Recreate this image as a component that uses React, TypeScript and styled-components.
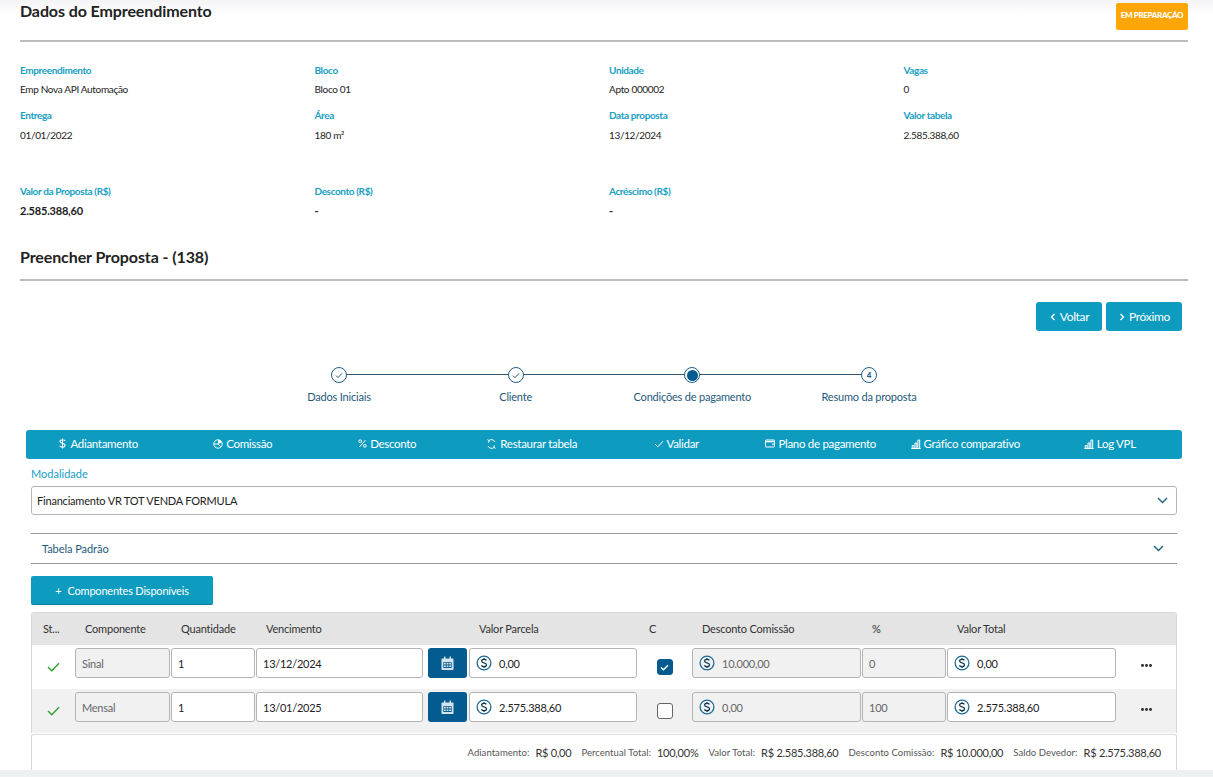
import React from "react";
import styled, { createGlobalStyle } from "styled-components";

const Global = createGlobalStyle`
  html, body { margin: 0; padding: 0; background: #fff; }
  body { font-family: Lato, "Liberation Sans", sans-serif; overflow: hidden; }
  * { box-sizing: border-box; }
`;

const Page = styled.div`
  width: 1213px; height: 777px; position: relative; overflow: hidden;
  background: linear-gradient(#f4f4f6 0, #fff 16px);
  padding: 0 25px 0 20px;
  display: flex; flex-direction: column;
`;
const TitleRow = styled.div`
  height: 42px; display: flex; justify-content: space-between; align-items: flex-start;
  border-bottom: 2px solid #bcbcbc;
`;
const Title = styled.h2`
  margin: 0; font-size: 16px; font-weight: 700; color: #222; line-height: 22px; letter-spacing: -0.1px;
`;
const Badge = styled.div`
  margin-top: 3px; width: 72px; height: 27px; background: #ffa607; border-radius: 2px;
  color: #fff; font-size: 8px; font-weight: 900; display: flex; align-items: center; justify-content: center;
  letter-spacing: -0.35px; padding-bottom: 3px;
`;
const InfoGrid = styled.div<{ $top: number }>`
  display: grid; grid-template-columns: repeat(4, 294.5px); width: 1178px; margin-top: ${p => p.$top}px;
`;
const Field = styled.div`
  height: 45px; display: flex; flex-direction: column;
`;
const FieldLabel = styled.div`
  font-size: 10px; line-height: 12px; font-weight: 700; color: #17a0c2; letter-spacing: -0.38px;
`;
const FieldValue = styled.div<{ $strong?: boolean; $gap: number }>`
  margin-top: ${p => p.$gap}px; line-height: 12px; color: #222;
  font-size: ${p => (p.$strong ? 11 : 10)}px; font-weight: ${p => (p.$strong ? 700 : 400)};
  letter-spacing: ${p => (p.$strong ? -0.2 : -0.33)}px;
`;
const SecondTitleRow = styled.div`
  margin-top: 16px; height: 35px; border-bottom: 2px solid #bcbcbc;
`;
const ActionBar = styled.div`
  margin-top: 21px; display: flex; justify-content: flex-end; gap: 4px; padding-right: 6px;
`;
const ActionButton = styled.button<{ $w: number }>`
  width: ${p => p.$w}px; height: 29px; border: none; border-radius: 3px; background: #0d9bbf; color: #fff;
  font: 400 12px Lato, sans-serif; letter-spacing: -0.35px;
  display: flex; align-items: center; justify-content: center; gap: 3px; padding: 0;
`;
const Stepper = styled.div`
  margin-top: 36px; display: flex; margin-left: 267px; width: 634px; position: relative; justify-content: space-between;
`;
const Step = styled.div`
  width: 104px; display: flex; flex-direction: column; align-items: center; position: relative;
`;
const StepLine = styled.div`
  position: absolute; left: 52px; width: 177px; top: 7px; height: 1px; background: #35566b;
`;
const Circle = styled.div`
  width: 16px; height: 16px; border-radius: 50%; background: #fff; z-index: 1; position: relative;
  border: 1px solid #1f5f87; display: flex; align-items: center; justify-content: center;
  color: #1f5f87; font-size: 8px; font-weight: 900;
`;
const ActiveDot = styled.div`
  width: 11px; height: 11px; border-radius: 50%; background: #045b8f;
`;
const StepLabel = styled.div`
  margin-top: 7px; font-size: 11px; line-height: 14px; color: #1e5a7c; white-space: nowrap; letter-spacing: -0.2px;
`;
const TabBar = styled.div`
  margin: 26px 6px 0 6px; height: 29px; background: #0d9bbf; border-radius: 3px;
  display: grid; grid-template-columns: repeat(8, 144.5px);
`;
const TabItem = styled.div`
  display: flex; align-items: center; justify-content: center; gap: 3px; color: #fff;
  font-size: 11.5px; letter-spacing: -0.3px; padding-bottom: 2px;
`;
const Section = styled.div`
  margin: 0 11px; display: flex; flex-direction: column; align-items: stretch;
`;
const ModalLabel = styled.div`
  margin-top: 8px; font-size: 11px; line-height: 14px; color: #17a0c2;
`;
const Select = styled.div`
  margin-top: 5px; height: 29px; border: 1px solid #b4b4b4; border-radius: 3px; padding: 0 8px 0 5px;
  display: flex; align-items: center; justify-content: space-between; font-size: 11px; letter-spacing: -0.2px; color: #222;
`;
const Accordion = styled.div`
  margin-top: 18px; height: 31px; border-top: 1px solid #999; border-bottom: 1px solid #999;
  display: flex; align-items: center; justify-content: space-between; padding: 0 13px 0 11px;
  font-size: 11px; letter-spacing: -0.05px; color: #1e5a7c;
`;
const AddButton = styled.button`
  margin-top: 12px; align-self: flex-start; width: 182px; height: 29px; background: #0d9bbf; color: #fff;
  border: none; border-bottom: 1px solid #0a7f9d; border-radius: 2px; font: 400 11px Lato, sans-serif; letter-spacing: -0.2px;
  display: flex; align-items: center; justify-content: center; gap: 6px; padding: 1px 0 0;
`;
const Table = styled.div`
  margin-top: 7px; border: 1px solid #d8d8d8; border-bottom: none; border-radius: 3px 3px 0 0;
`;
const cols = "42px 95px 84px 167px 44px 168px 53px 169px 84px 169px 59px";
const HeaderRow = styled.div`
  display: grid; grid-template-columns: ${cols}; column-gap: 1px; height: 32px; background: #e4e4e4; align-items: center;
  padding-bottom: 2px;
`;
const HeaderCell = styled.div<{ $pad?: number }>`
  padding-left: ${p => p.$pad ?? 10}px; font-size: 11px; letter-spacing: -0.2px; color: #333; white-space: nowrap;
`;
const Row = styled.div<{ $alt?: boolean }>`
  display: grid; grid-template-columns: ${cols}; column-gap: 1px; height: 44px; align-items: start;
  padding-top: 3px; background: ${p => (p.$alt ? "#f1f1f1" : "#fff")};
`;
const StatusCell = styled.div`
  display: flex; justify-content: center; padding-top: 14px;
`;
const Input = styled.div<{ $disabled?: boolean }>`
  height: 30px; border: 1px solid #b4b4b4; border-radius: 3px; display: flex; align-items: center; gap: 7px;
  padding-left: 6px; font-size: 11px; letter-spacing: -0.25px; background: ${p => (p.$disabled ? "#f1f1f1" : "#fff")};
  color: ${p => (p.$disabled ? "#666" : "#222")}; white-space: nowrap;
`;
const CalendarButton = styled.div`
  margin-left: 4px; width: 39px; height: 30px; border-radius: 3px; background: #045b8f;
  display: flex; align-items: center; justify-content: center;
`;
const CheckCell = styled.div`
  display: flex; justify-content: center; padding: 11px 0 0 0;
`;
const CheckBox = styled.div<{ $on?: boolean }>`
  width: 16px; height: 16px; border-radius: 3px; border: 1px solid ${p => (p.$on ? "#045b8f" : "#666")};
  background: ${p => (p.$on ? "#045b8f" : "#fff")}; display: flex; align-items: center; justify-content: center;
`;
const Dots = styled.div`
  display: flex; justify-content: center; gap: 1.2px; padding: 16px 0 0 0;
`;
const Dot = styled.span`
  width: 2.8px; height: 2.8px; border-radius: 50%; background: #333;
`;
const Footer = styled.div`
  margin-top: 1px; height: 40px; border: 1px solid #d8d8d8; border-top: 1px solid #ddd; border-radius: 3px 3px 0 0; background: #fff;
  display: flex; justify-content: flex-end; align-items: flex-start; padding: 9px 15px 0 0; gap: 10px;
`;
const Stat = styled.div`
  display: flex; align-items: center; gap: 6px; height: 16px; white-space: nowrap;
`;
const StatLabel = styled.span`
  font-size: 9.5px; color: #555; letter-spacing: 0.05px;
`;
const StatValue = styled.span`
  font-size: 11px; letter-spacing: -0.25px; color: #333;
`;
const BottomStrip = styled.div`
  position: absolute; left: 0; right: 0; bottom: 0; height: 7px; background: #edf1f1;
`;
const CoinSvg = styled.svg`
  flex-shrink: 0;
`;

const ChevronLeft = () => (
  <svg width="8" height="10" viewBox="0 0 8 10"><path d="M5.5 2 2.5 5l3 3" fill="none" stroke="#fff" strokeWidth="1.3" /></svg>
);
const ChevronRight = () => (
  <svg width="8" height="10" viewBox="0 0 8 10"><path d="M2.5 2l3 3-3 3" fill="none" stroke="#fff" strokeWidth="1.3" /></svg>
);
const Chevron = () => (
  <svg width="11" height="7" viewBox="0 0 11 7"><path d="M1 1l4.5 4.5L10 1" fill="none" stroke="#1d5f85" strokeWidth="1.4" /></svg>
);
const StepCheck = () => (
  <svg width="8" height="7" viewBox="0 0 8 7"><path d="M1 3.6 3 5.6 7 1.4" fill="none" stroke="#35566b" strokeWidth="1" /></svg>
);
const Coin = () => (
  <CoinSvg width="16" height="16" viewBox="0 0 16 16">
    <circle cx="8" cy="8" r="6.9" fill="none" stroke="#1d6a94" strokeWidth="1.3" />
    <path d="M10.4 5.4C10 4.6 9 4.3 8 4.3c-1.3 0-2.4.6-2.4 1.8 0 2.4 4.9 1.2 4.9 3.7 0 1.2-1.2 1.9-2.5 1.9-1.1 0-2.1-.4-2.6-1.3M8 3v1.3M8 11.7V13" fill="none" stroke="#12384f" strokeWidth="1.3" />
  </CoinSvg>
);
const Calendar = () => (
  <svg width="13" height="14" viewBox="0 0 13 14">
    <path d="M3 0.5h1.4v2H8.6v-2H10v2h1.5c.6 0 1 .4 1 1V13c0 .6-.4 1-1 1h-10c-.6 0-1-.4-1-1V3.5c0-.6.4-1 1-1H3z" fill="#d4e4ee" />
    <path d="M2.3 6.2h8.4v5.8H2.3z" fill="#045b8f" />
    <path d="M3 7h1.8v1.4H3zM5.6 7h1.8v1.4H5.6zM8.2 7H10v1.4H8.2zM3 9.4h1.8v1.5H3zM5.6 9.4h1.8v1.5H5.6zM8.2 9.4H10v1.5H8.2z" fill="#d4e4ee" />
  </svg>
);
const GreenCheck = () => (
  <svg width="13" height="10" viewBox="0 0 13 10"><path d="M1 5l3.8 3.8L12 1.2" fill="none" stroke="#2fa12f" strokeWidth="1.4" /></svg>
);
const BoxCheck = () => (
  <svg width="9" height="7" viewBox="0 0 9 7"><path d="M1 3.5l2.4 2.3L8 1.2" fill="none" stroke="#fff" strokeWidth="1.5" /></svg>
);

const stroke = { fill: "none", stroke: "#fff", strokeWidth: 1 } as const;
const TabIcon = ({ kind }: { kind: string }) => {
  if (kind === "dollar")
    return (
      <svg width="9" height="11" viewBox="0 0 9 11"><path d="M7.2 3C6.8 2 5.7 1.7 4.5 1.7 3 1.7 2 2.3 2 3.4c0 2.4 5.1 1.3 5.1 3.9 0 1.2-1.2 1.9-2.6 1.9-1.3 0-2.4-.5-2.8-1.4M4.5.4v10.2" {...stroke} strokeWidth={1.1} /></svg>
    );
  if (kind === "pie")
    return (
      <svg width="10" height="10" viewBox="0 0 10 10"><circle cx="5" cy="5" r="4.2" {...stroke} /><path d="M5 5l2.8 2.8" {...stroke} /><path d="M5 5V1h1.2a4 4 0 0 1 2.6 2.4z" fill="#fff" /><path d="M5 5H1" {...stroke} /></svg>
    );
  if (kind === "percent")
    return (
      <svg width="9" height="9" viewBox="0 0 9 9"><circle cx="2.2" cy="2.2" r="1.4" {...stroke} /><circle cx="6.8" cy="6.8" r="1.4" {...stroke} /><path d="M7.6 1 1.4 8" {...stroke} /></svg>
    );
  if (kind === "reset")
    return (
      <svg width="11" height="10" viewBox="0 0 11 10"><path d="M3 1.4A4 4 0 0 1 9 3M8 8.6A4 4 0 0 1 2 7" {...stroke} /><path d="M1.4.6 3.2 1.8 2.6 3.6M9.6 9.4 7.8 8.2l.6-1.8" {...stroke} /></svg>
    );
  if (kind === "check")
    return (
      <svg width="10" height="8" viewBox="0 0 10 8"><path d="M1 4l2.8 2.8L9 1.2" {...stroke} /></svg>
    );
  if (kind === "wallet")
    return (
      <svg width="10" height="9" viewBox="0 0 10 9"><rect x="0.5" y="1" width="9" height="7" rx="0.6" {...stroke} /><path d="M.5 2.6h9" {...stroke} strokeWidth={1.4} /><path d="M7 5.2h2.5" {...stroke} /></svg>
    );
  return (
    <svg width="10" height="10" viewBox="0 0 10 10"><path d="M.3 9.5h9.4M1.2 9V6.5h1.8V9M4 9V4h1.8v5M6.9 9V1h1.8v8" {...stroke} /></svg>
  );
};

const tabs = [
  ["dollar", "Adiantamento"], ["pie", "Comissão"], ["percent", "Desconto"], ["reset", "Restaurar tabela"],
  ["check", "Validar"], ["wallet", "Plano de pagamento"], ["bars", "Gráfico comparativo"], ["bars", "Log VPL"],
];
const info1 = [
  ["Empreendimento", "Emp Nova API Automação"], ["Bloco", "Bloco 01"], ["Unidade", "Apto 000002"], ["Vagas", "0"],
];
const info2 = [
  ["Entrega", "01/01/2022"], ["Área", "180 m²"], ["Data proposta", "13/12/2024"], ["Valor tabela", "2.585.388,60"],
];
const info3 = [
  ["Valor da Proposta (R$)", "2.585.388,60"], ["Desconto (R$)", "-"], ["Acréscimo (R$)", "-"],
];
const rows = [
  { name: "Sinal", date: "13/12/2024", val: "0,00", on: true, desc: "10.000,00", pct: "0", total: "0,00" },
  { name: "Mensal", date: "13/01/2025", val: "2.575.388,60", on: false, desc: "0,00", pct: "100", total: "2.575.388,60" },
];
const stats = [
  ["Adiantamento:", "R$ 0,00"], ["Percentual Total:", "100,00%"], ["Valor Total:", "R$ 2.585.388,60"],
  ["Desconto Comissão:", "R$ 10.000,00"], ["Saldo Devedor:", "R$ 2.575.388,60"],
];
const steps = ["Dados Iniciais", "Cliente", "Condições de pagamento", "Resumo da proposta"];

export default function App() {
  return (
    <Page>
      <Global />
      <TitleRow>
        <Title>Dados do Empreendimento</Title>
        <Badge>EM PREPARAÇÃO</Badge>
      </TitleRow>
      <InfoGrid $top={22}>
        {info1.map(([l, v]) => (
          <Field key={l}>
            <FieldLabel>{l}</FieldLabel>
            <FieldValue $gap={7}>{v}</FieldValue>
          </Field>
        ))}
        {info2.map(([l, v]) => (
          <Field key={l}>
            <FieldLabel>{l}</FieldLabel>
            <FieldValue $gap={8}>{v}</FieldValue>
          </Field>
        ))}
      </InfoGrid>
      <InfoGrid $top={31}>
        {info3.map(([l, v]) => (
          <Field key={l}>
            <FieldLabel>{l}</FieldLabel>
            <FieldValue $gap={8} $strong>{v}</FieldValue>
          </Field>
        ))}
      </InfoGrid>
      <SecondTitleRow>
        <Title>Preencher Proposta - (138)</Title>
      </SecondTitleRow>
      <ActionBar>
        <ActionButton $w={66}><ChevronLeft />Voltar</ActionButton>
        <ActionButton $w={76}><ChevronRight />Próximo</ActionButton>
      </ActionBar>
      <Stepper>
        {steps.map((s, i) => (
          <Step key={s}>
            {i < 3 && <StepLine />}
            <Circle>{i < 2 ? <StepCheck /> : i === 2 ? <ActiveDot /> : "4"}</Circle>
            <StepLabel>{s}</StepLabel>
          </Step>
        ))}
      </Stepper>
      <TabBar>
        {tabs.map(([k, t]) => (
          <TabItem key={t}><TabIcon kind={k} />{t}</TabItem>
        ))}
      </TabBar>
      <Section>
        <ModalLabel>Modalidade</ModalLabel>
        <Select>Financiamento VR TOT VENDA FORMULA<Chevron /></Select>
        <Accordion>Tabela Padrão<Chevron /></Accordion>
        <AddButton><span>+</span>Componentes Disponíveis</AddButton>
        <Table>
          <HeaderRow>
            <HeaderCell $pad={11}>St...</HeaderCell>
            <HeaderCell>Componente</HeaderCell>
            <HeaderCell>Quantidade</HeaderCell>
            <HeaderCell>Vencimento</HeaderCell>
            <HeaderCell />
            <HeaderCell>Valor Parcela</HeaderCell>
            <HeaderCell $pad={11}>C</HeaderCell>
            <HeaderCell>Desconto Comissão</HeaderCell>
            <HeaderCell>%</HeaderCell>
            <HeaderCell>Valor Total</HeaderCell>
            <HeaderCell />
          </HeaderRow>
          {rows.map((r, i) => (
            <Row key={r.name} $alt={i === 1}>
              <StatusCell><GreenCheck /></StatusCell>
              <Input $disabled>{r.name}</Input>
              <Input>1</Input>
              <Input>{r.date}</Input>
              <CalendarButton><Calendar /></CalendarButton>
              <Input><Coin />{r.val}</Input>
              <CheckCell><CheckBox $on={r.on}>{r.on && <BoxCheck />}</CheckBox></CheckCell>
              <Input $disabled><Coin />{r.desc}</Input>
              <Input $disabled>{r.pct}</Input>
              <Input><Coin />{r.total}</Input>
              <Dots><Dot /><Dot /><Dot /></Dots>
            </Row>
          ))}
        </Table>
        <Footer>
          {stats.map(([l, v]) => (
            <Stat key={l}><StatLabel>{l}</StatLabel><StatValue>{v}</StatValue></Stat>
          ))}
        </Footer>
      </Section>
      <BottomStrip />
    </Page>
  );
}
